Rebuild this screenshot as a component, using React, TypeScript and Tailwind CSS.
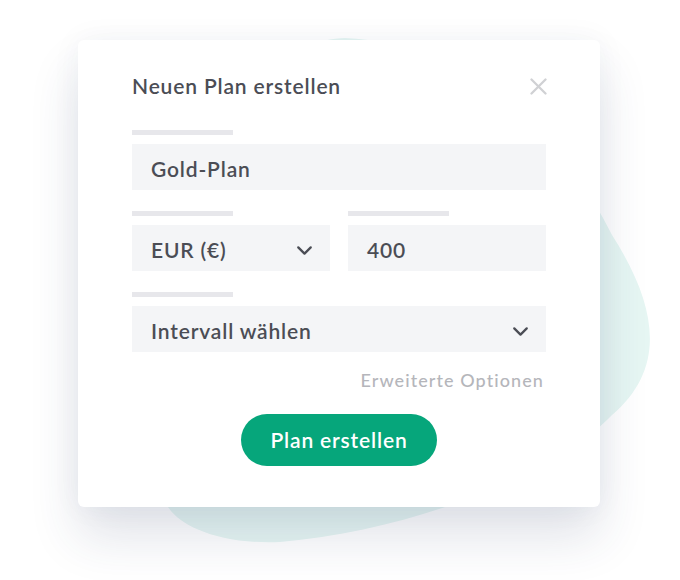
import { ChevronDown } from "lucide-react";

function Label() {
  return <div className="h-[5px] w-[101px] bg-[#e7e7eb]" />;
}

function Field({ value, select }: { value: string; select?: boolean }) {
  return (
    <div className="flex h-[46px] items-center justify-between bg-[#f4f5f7] pl-[19px] pr-[13px] pt-[4px]">
      <span className="text-[21px] font-semibold tracking-[0.04em] text-[#4b4d55]">{value}</span>
      {select && <ChevronDown className="h-[25px] w-[25px] text-[#4b4d55]" strokeWidth={2.2} />}
    </div>
  );
}

export default function App() {
  return (
    <div
      className="relative h-[580px] w-[680px] overflow-hidden bg-white pl-[78px] pt-[40px]"
      style={{ fontFamily: "Lato, 'Open Sans', sans-serif" }}
    >
      {/* background blob */}
      <svg className="absolute left-0 top-0" width="680" height="580" viewBox="0 0 680 580">
        <path
          d="M345 38 C465 42 565 140 612 235 C660 310 665 370 612 415 C560 470 420 530 280 542 C210 545 170 520 165 500 L150 200 C200 90 290 40 345 38 Z"
          fill="#e6f6f3"
        />
      </svg>

      <div className="relative flex w-[522px] flex-col rounded-[6px] bg-white px-[54px] pb-[41px] pt-[33px] shadow-[0_30px_50px_rgba(45,60,100,0.14),0_0_30px_rgba(45,60,100,0.05)]">
        <div className="flex h-[26px] items-center justify-between">
          <h2 className="text-[21px] font-semibold tracking-[0.04em] text-[#4b4d55]">Neuen Plan erstellen</h2>
          <svg width="17" height="17" viewBox="0 0 17 17" className="mr-[-1px]">
            <path d="M1.5 1.5 L15.5 15.5 M15.5 1.5 L1.5 15.5" stroke="#d0d1d4" strokeWidth="2.3" strokeLinecap="round" />
          </svg>
        </div>

        <div className="mt-[31px] flex flex-col gap-[9px]">
          <Label />
          <Field value="Gold-Plan" />
        </div>

        <div className="mt-[21px] grid grid-cols-2 gap-[18px]">
          <div className="flex flex-col gap-[9px]">
            <Label />
            <Field value="EUR (€)" select />
          </div>
          <div className="flex flex-col gap-[9px]">
            <Label />
            <Field value="400" />
          </div>
        </div>

        <div className="mt-[21px] flex flex-col gap-[9px]">
          <Label />
          <Field value="Intervall wählen" select />
        </div>

        <div className="mt-[17px] pr-[2px] text-right text-[18px] font-medium leading-[22px] tracking-[0.06em] text-[#b5b6bb]">
          Erweiterte Optionen
        </div>

        <div className="mt-[23px] flex justify-center">
          <button className="h-[52px] w-[196px] rounded-full bg-[#06a67b] text-[21px] font-semibold tracking-[0.04em] text-white">
            Plan erstellen
          </button>
        </div>
      </div>
    </div>
  );
}
